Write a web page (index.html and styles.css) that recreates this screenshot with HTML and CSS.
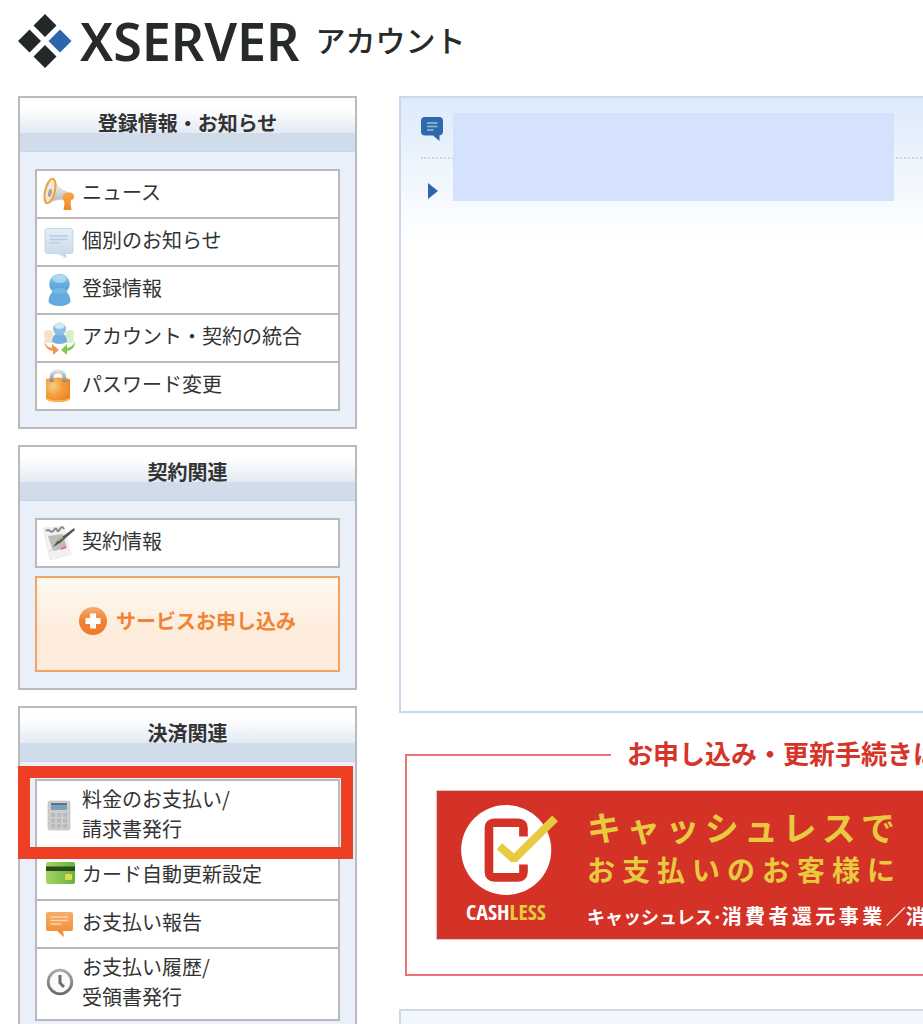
FILE: index.html
```html
<!DOCTYPE html>
<html lang="ja">
<head>
<meta charset="utf-8">
<meta name="viewport" content="width=device-width, initial-scale=1">
<title>XSERVER アカウント</title>
<link rel="stylesheet" href="styles.css">
</head>
<body>
<div class="page">
  <header class="site-header">
    <a class="logo" href="#">
      <svg class="logo-mark" width="54" height="54" viewBox="0 0 54 54" aria-hidden="true">
        <path d="M27 0l11.500 11.500L27 23 15.500 11.500zM11.500 15.500L23 27 11.500 38.500 0 27zM27 31l11.500 11.500L27 54 15.500 42.500z" fill="#232725"/>
        <path d="M42 15.500L53.500 27 42 38.500 30.500 27z" fill="#2d66ad"/>
      </svg>
      <span class="logo-name">XSERVER</span>
      <span class="logo-sub">アカウント</span>
    </a>
  </header>

  <div class="columns">
    <nav class="sidebar">
      <section class="panel">
        <h2 class="panel-title">登録情報・お知らせ</h2>
        <div class="panel-body">
          <ul class="menu">
            <li class="menu-item"><a class="menu-link" href="#">
              <svg class="icon" viewBox="0 0 32 34" aria-hidden="true">
                <defs><linearGradient id="horn" x1="0" y1="0" x2="0" y2="1"><stop offset="0" stop-color="#fff"/><stop offset="1" stop-color="#b5b5b5"/></linearGradient>
                <linearGradient id="org" x1="0" y1="0" x2="0" y2="1"><stop offset="0" stop-color="#f6a94a"/><stop offset="1" stop-color="#ee8a20"/></linearGradient></defs>
                <path d="M10 2Q15 12 24 15v8Q14 21 5 26z" fill="url(#horn)" stroke="#ccc" stroke-width=".6"/>
                <ellipse cx="7" cy="14" rx="4.800" ry="12.500" transform="rotate(14 7 14)" fill="#eee7dd" stroke="#eda13d" stroke-width="2"/>
                <ellipse cx="7" cy="16" rx="1.800" ry="4" transform="rotate(14 7 16)" fill="#b1a491"/>
                <path d="M21 17q4-3 8-1 3 2 2 5-1 2-3 2l-.500 3 1 7h-8l1-7-1-3q-2-3 .5-6z" fill="url(#org)"/>
              </svg><span>ニュース</span></a></li>
            <li class="menu-item"><a class="menu-link" href="#">
              <svg class="icon" viewBox="0 0 32 34" aria-hidden="true">
                <defs><linearGradient id="pale" x1="0" y1="0" x2="0" y2="1"><stop offset="0" stop-color="#e3edf6"/><stop offset="1" stop-color="#c9d9e9"/></linearGradient></defs>
                <path d="M4.500 3.500h23q2.500 0 2.500 2.500v20q0 2.500-2.500 2.500H22l1 4-7.500-4h-11Q2 28.500 2 26V6q0-2.500 2.500-2.500z" fill="url(#pale)" stroke="#c3d5e8"/>
                <path d="M6.500 11h18M6.500 14.500h18M6.500 18h10" stroke="#b8cbe1" stroke-width="1.300"/>
              </svg><span>個別のお知らせ</span></a></li>
            <li class="menu-item"><a class="menu-link" href="#">
              <svg class="icon" viewBox="0 0 32 34" aria-hidden="true">
                <defs><linearGradient id="blue" x1="0" y1="0" x2="0" y2="1"><stop offset="0" stop-color="#9fd2ee"/><stop offset=".5" stop-color="#63aede"/><stop offset="1" stop-color="#559fd3"/></linearGradient></defs>
                <path d="M5.500 29q0-8 5.500-11h11q5.500 3 5.500 11-3 4-11 4t-11-4z" fill="#62abdc"/>
                <circle cx="16.500" cy="11" r="10.300" fill="url(#blue)"/>
                <ellipse cx="16.500" cy="6" rx="7" ry="4" fill="#c6e6f6" opacity=".6"/>
                <ellipse cx="16.500" cy="18" rx="7.500" ry="3" fill="#7cc0e4" opacity=".7"/>
              </svg><span>登録情報</span></a></li>
            <li class="menu-item"><a class="menu-link" href="#">
              <svg class="icon" viewBox="0 0 32 34" aria-hidden="true">
                <path d="M1 12q0-3 4-3t5 3l-1 10H2z" fill="#fae0c8"/><path d="M22 12q1-3 5-3t4 3l-1 10h-7z" fill="#d9efcc"/>
                <path d="M9 21q0-6 4-8h7q4 2 4 8-3 2-7.500 2T9 21z" fill="#76aedd"/>
                <circle cx="16.500" cy="8" r="6.500" fill="#8dbfe6"/><ellipse cx="16.500" cy="4.800" rx="5" ry="3" fill="#d5e9f7"/>
                <path d="M1 20q2 6 8 7v-4l7 6-6 5v-4Q2 29 1 20z" fill="#f3964c"/>
                <path d="M32 20q-2 6-8 7v-4l-6 6 6 5v-4q8-1 8-10z" fill="#86c657"/>
              </svg><span>アカウント・契約の統合</span></a></li>
            <li class="menu-item"><a class="menu-link" href="#">
              <svg class="icon" viewBox="0 0 32 34" aria-hidden="true">
                <defs><radialGradient id="lock" cx=".3" cy=".35" r=".8"><stop offset="0" stop-color="#fad08b"/><stop offset=".45" stop-color="#f5a13c"/><stop offset="1" stop-color="#ed7f28"/></radialGradient>
                <linearGradient id="steel" x1="0" y1="0" x2="0" y2="1"><stop offset="0" stop-color="#ddd"/><stop offset="1" stop-color="#858585"/></linearGradient></defs>
                <path d="M3 10q12-3 24 0v20q-2 3-12 3T3 30z" fill="url(#lock)"/>
                <path d="M3.500 29.500q3 2.500 11.500 2.500t11.500-2.500" fill="none" stroke="#f8c24e" stroke-width="1.500"/>
                <path d="M8.500 13V9q0-6.500 6.500-6.500T21.500 9v4" fill="none" stroke="url(#steel)" stroke-width="4"/>
              </svg><span>パスワード変更</span></a></li>
          </ul>
        </div>
      </section>

      <section class="panel">
        <h2 class="panel-title">契約関連</h2>
        <div class="panel-body">
          <ul class="menu">
            <li class="menu-item"><a class="menu-link" href="#">
              <svg class="icon" viewBox="0 0 32 34" aria-hidden="true">
                <path d="M0 2l21-1 7 27-21 6z" fill="#f1f1f1" stroke="#e2e2e2" stroke-width=".6"/>
                <path d="M5 10l15-2 4 14-14 3z" fill="#bdbdbd"/>
                <path d="M3 5q2-2 4 0t4-1 3 0 3-1 4 0" fill="none" stroke="#888" stroke-width="2"/>
                <path d="M6 25l7-3M18 22l5-1" stroke="#ccc"/><path d="M18 23l5-2" stroke="#e96d77" stroke-width="2"/>
                <path d="M10 21L15 14 31 2l1 2L17 17z" fill="#585650"/><path d="M15 15l5-4" stroke="#c8ad72" stroke-width="1.500"/>
              </svg><span>契約情報</span></a></li>
          </ul>
          <a class="apply" href="#">
            <svg width="28" height="28" viewBox="0 0 28 28" aria-hidden="true">
              <defs><linearGradient id="plus" x1="0" y1="0" x2="0" y2="1"><stop offset="0" stop-color="#f8ab72"/><stop offset=".5" stop-color="#ef8135"/><stop offset="1" stop-color="#f27a24"/></linearGradient></defs>
              <circle cx="14" cy="14" r="14" fill="url(#plus)"/>
              <path d="M11 6.500h6V11h4.500v6H17v4.500h-6V17H6.500v-6H11z" fill="#fff"/>
            </svg><span>サービスお申し込み</span></a>
        </div>
      </section>

      <section class="panel">
        <h2 class="panel-title">決済関連</h2>
        <div class="panel-body">
          <ul class="menu">
            <li class="menu-item is-marked"><a class="menu-link" href="#">
              <svg class="icon" viewBox="0 0 32 34" aria-hidden="true">
                <rect x="5" y="2" width="22" height="29" rx="1.500" fill="#cdcdcd" stroke="#b9b9b9" stroke-width=".6"/>
                <path d="M8 4h16v7H8z" fill="#7f9fb6"/><path d="M8 4h16v2H8z" fill="#527793"/>
                <path d="M8 14h4v4H8zM14 14h4v4h-4zM20 14h4v4h-4zM8 19.500h4v4H8zM14 19.500h4v4h-4zM20 19.500h4v4h-4zM8 25h4v4H8zM14 25h4v4h-4zM20 25h4v4h-4z" fill="#b7b9bc"/>
              </svg><span>料金のお支払い/<br>請求書発行</span></a></li>
            <li class="menu-item"><a class="menu-link" href="#">
              <svg class="icon" viewBox="0 0 32 34" aria-hidden="true">
                <defs><linearGradient id="card" x1="0" y1="0" x2="1" y2="0"><stop offset="0" stop-color="#a5d35e"/><stop offset="1" stop-color="#66b242"/></linearGradient></defs>
                <rect x="3" y="3" width="29" height="22" rx="2" fill="url(#card)"/>
                <path d="M3 7.500h29V12H3z" fill="#2c4a20"/><rect x="22" y="15" width="7" height="6" rx="1" fill="#d7dd50"/>
              </svg><span>カード自動更新設定</span></a></li>
            <li class="menu-item"><a class="menu-link" href="#">
              <svg class="icon" viewBox="0 0 32 34" aria-hidden="true">
                <defs><linearGradient id="talk" x1="0" y1="0" x2="0" y2="1"><stop offset="0" stop-color="#f6ad6a"/><stop offset="1" stop-color="#f08829"/></linearGradient></defs>
                <path d="M5 5h23q2 0 2 2v15q0 2-2 2h-8l1 6L14 24H5q-2 0-2-2V7q0-2 2-2z" fill="url(#talk)"/>
                <path d="M7.500 10h18M7.500 13.500h18M7.500 17h11" stroke="#fbd3ae" stroke-width="1.300"/>
              </svg><span>お支払い報告</span></a></li>
            <li class="menu-item"><a class="menu-link" href="#">
              <svg class="icon" viewBox="0 0 32 34" aria-hidden="true">
                <defs><linearGradient id="clock" x1="0" y1="0" x2="0" y2="1"><stop offset="0" stop-color="#aaa"/><stop offset="1" stop-color="#6a6a6a"/></linearGradient></defs>
                <circle cx="17" cy="15" r="11.800" fill="#fafafa" stroke="url(#clock)" stroke-width="2.800"/>
                <path d="M17 8v8l4 4" fill="none" stroke="#6d6d6d" stroke-width="3"/>
              </svg><span>お支払い履歴/<br>受領書発行</span></a></li>
          </ul>
        </div>
      </section>
    </nav>

    <main class="main">
      <section class="notice">
        <div class="notice-head">
          <svg width="22" height="25" viewBox="0 0 22 25" aria-hidden="true">
            <path d="M4 0h14q4 0 4 4v10q0 4-3.500 4.500V24L12 18.500H4q-4 0-4-4V4q0-4 4-4z" fill="#3068ac"/>
            <path d="M6 6h10.500M6 9.500h10.500M6 13h6.500" stroke="#9db9dd" stroke-width="1.300"/>
          </svg>
        </div>
        <div class="notice-row">
          <svg width="10" height="16" viewBox="0 0 10 16" aria-hidden="true"><path d="M0 0l10 8-10 8z" fill="#2c65ab"/></svg>
        </div>
        <div class="notice-cover"></div>
      </section>

      <fieldset class="campaign">
        <legend class="campaign-title">お申し込み・更新手続きは</legend>
        <a class="banner" href="#">
          <span class="cashless">
            <svg width="104" height="96" viewBox="0 0 104 96" aria-hidden="true">
              <circle cx="47" cy="48" r="47" fill="#fff"/>
              <path d="M65 34V25q0-5.500-5.500-5.500h-25q-5.500 0-5.500 5.500v46q0 5.500 5.500 5.500h25q5.500 0 5.500-5.500v-8" fill="none" stroke="#d43127" stroke-width="9"/>
              <path d="M40 44l15 13.500L98 15" fill="none" stroke="#e7ca40" stroke-width="8.500" stroke-linejoin="bevel"/>
            </svg>
            <span class="cashless-name">CASH<span class="accent">LESS</span></span>
          </span>
          <span class="banner-copy">
            <span class="copy-top">キャッシュレスで</span>
            <span class="copy-mid">お支払いのお客様に</span>
            <span class="copy-note"><span class="copy-kana">キャッシュレス･</span><span class="copy-kanji">消費者還元事業／</span><span>消</span></span>
          </span>
        </a>
      </fieldset>

      <section class="next-panel"></section>
    </main>
  </div>
</div>
</body>
</html>
```

FILE: styles.css
```css
* {
  box-sizing: border-box;
}

body {
  margin: 0;
  background: #fff;
  color: #333;
  font-family: "Noto Sans CJK JP", sans-serif;
  font-size: 20px;
  line-height: 30px;
  overflow-x: hidden;
}

a {
  color: inherit;
  text-decoration: none;
}

.page {
  height: 100vh;
  overflow: hidden;
}

.site-header {
  padding: 14px 18px 28px;
}

.logo {
  display: flex;
  align-items: center;
  height: 54px;
  color: #262a28;
}

.logo-name {
  margin-left: 8px;
  font-family: "Noto Sans", "Open Sans", sans-serif;
  font-size: 52px;
  font-weight: 600;
  line-height: 54px;
}

.logo-sub {
  margin-left: 16px;
  padding-bottom: 4px;
  font-size: 30px;
  font-weight: 500;
}

.columns {
  display: flex;
  gap: 42px;
  padding-left: 18px;
}

.sidebar {
  display: flex;
  flex: 0 0 339px;
  flex-direction: column;
  gap: 16px;
}

.panel {
  border: 2px solid #b9bbbd;
  background: #e9f0f9;
}

.panel-title {
  margin: 0;
  padding: 10px 0 13px;
  border-bottom: 1px solid #c5d4e8;
  background: linear-gradient(#fff 20%, #e3eaf3 66%, #d1dcea 67%);
  font-size: 20px;
  font-weight: 700;
  text-align: center;
}

.panel-body {
  padding: 17px 15px 16px;
}

.menu {
  margin: 0;
  padding: 0;
  border: 2px solid #b9b9b9;
  background: #fff;
  list-style: none;
}

.menu-item + .menu-item {
  border-top: 2px solid #b9b9b9;
}

.menu-link {
  display: flex;
  align-items: center;
  gap: 7px;
  min-height: 46px;
  padding: 3px 6px;
}

.menu-link span {
  padding-bottom: 4px;
}

.icon {
  flex: none;
  width: 32px;
  height: 34px;
}

.is-marked {
  position: relative;
}

.is-marked::after {
  position: absolute;
  inset: -15px -15px -8px -19px;
  border: 12px solid #ec3f24;
  content: "";
  pointer-events: none;
}

.apply {
  display: flex;
  align-items: center;
  justify-content: center;
  gap: 9px;
  height: 96px;
  margin-top: 8px;
  padding-bottom: 6px;
  border: 2px solid #f5a35f;
  background: linear-gradient(#fffaf1, #fdecdb 60%);
  color: #f28335;
  font-weight: 700;
}

.main {
  flex: 1 0 860px;
}

.notice {
  position: relative;
  min-height: 617px;
  padding: 19px 20px;
  border: 2px solid #c5d8ed;
  background: linear-gradient(#dceafa, #fff 136px);
}

.notice-head {
  height: 42px;
  border-bottom: 2px dotted #d3d5d5;
}

.notice-row {
  padding: 24px 7px;
  line-height: 0;
}

.notice-cover {
  position: absolute;
  top: 15px;
  left: 52px;
  width: 441px;
  height: 88px;
  background: #d5e2fd;
}

.campaign {
  margin: 27px 6px 33px;
  padding: 20px 29px 34px;
  border: 2px solid #ec7479;
}

.campaign-title {
  margin-left: 175px;
  padding: 0 16px 4px;
  color: #d63429;
  font-size: 26px;
  font-weight: 700;
  line-height: 26px;
  white-space: nowrap;
}

.banner {
  display: flex;
  gap: 24px;
  height: 150px;
  padding: 13px 22px;
  border: 1px solid #ccc;
  background: #d43127;
  overflow: hidden;
}

.cashless {
  display: flex;
  flex: 0 0 104px;
  flex-direction: column;
}

.cashless-name {
  width: 94px;
  color: #fff;
  font-family: "Liberation Sans Narrow", "Open Sans Condensed", "Liberation Sans", sans-serif;
  font-size: 22px;
  font-weight: 700;
  text-align: center;
}

.accent {
  color: #e7ca40;
}

.banner-copy {
  display: flex;
  flex: none;
  flex-direction: column;
  color: #e7ca40;
  font-weight: 700;
}

.copy-top,
.copy-mid {
  width: 308px;
  text-align: justify;
  text-align-last: justify;
}

.copy-top {
  font-size: 34px;
  line-height: 46px;
}

.copy-mid {
  font-size: 28px;
  line-height: 38px;
}

.copy-note {
  display: flex;
  padding-top: 13px;
  color: #fff;
  font-size: 20px;
  white-space: nowrap;
}

.copy-kana {
  font-size: 18px;
}

.copy-kanji {
  width: 184px;
  text-align: justify;
  text-align-last: justify;
}

.next-panel {
  min-height: 120px;
  border: 2px solid #c9dbeb;
  background: linear-gradient(#f3f7fd, #fff);
}
```
